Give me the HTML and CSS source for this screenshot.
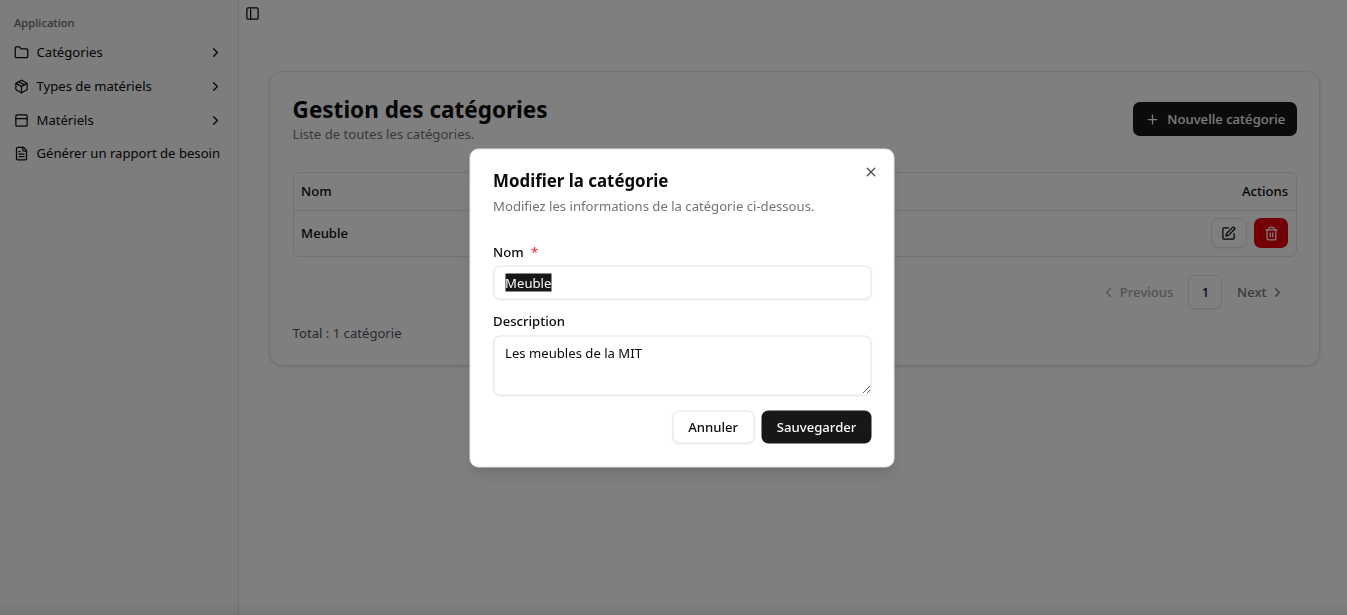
FILE: index.html
```html
<!DOCTYPE html>
<html lang="fr">
<head>
<meta charset="utf-8">
<title>Gestion des catégories</title>
<link rel="stylesheet" href="styles.css">
</head>
<body>
<div class="app">
  <aside class="sidebar">
    <div class="group-label">Application</div>
    <nav class="menu">
      <a class="menu-item"><svg class="icon" viewBox="0 0 24 24"><path d="M20 20a2 2 0 0 0 2-2V8a2 2 0 0 0-2-2h-7.9a2 2 0 0 1-1.69-.9L9.6 3.9A2 2 0 0 0 7.93 3H4a2 2 0 0 0-2 2v13a2 2 0 0 0 2 2Z"/></svg><span>Catégories</span><svg class="icon chevron" viewBox="0 0 24 24"><path d="m9 18 6-6-6-6"/></svg></a>
      <a class="menu-item"><svg class="icon" viewBox="0 0 24 24"><path d="M11 21.73a2 2 0 0 0 2 0l7-4A2 2 0 0 0 21 16V8a2 2 0 0 0-1-1.73l-7-4a2 2 0 0 0-2 0l-7 4A2 2 0 0 0 3 8v8a2 2 0 0 0 1 1.73z"/><path d="M12 22V12"/><path d="m3.3 7 8.7 5 8.7-5"/><path d="m7.5 4.27 9 5.15"/></svg><span>Types de matériels</span><svg class="icon chevron" viewBox="0 0 24 24"><path d="m9 18 6-6-6-6"/></svg></a>
      <a class="menu-item"><svg class="icon" viewBox="0 0 24 24"><rect width="18" height="18" x="3" y="3" rx="2"/><path d="M3 9h18"/></svg><span>Matériels</span><svg class="icon chevron" viewBox="0 0 24 24"><path d="m9 18 6-6-6-6"/></svg></a>
      <a class="menu-item"><svg class="icon" viewBox="0 0 24 24"><path d="M15 2H6a2 2 0 0 0-2 2v16a2 2 0 0 0 2 2h12a2 2 0 0 0 2-2V7Z"/><path d="M14 2v4a2 2 0 0 0 2 2h4"/><path d="M10 9H8"/><path d="M16 13H8"/><path d="M16 17H8"/></svg><span>Générer un rapport de besoin</span></a>
    </nav>
  </aside>
  <main class="main">
    <div class="topbar"><svg class="icon" viewBox="0 0 24 24"><rect width="18" height="18" x="3" y="3" rx="2"/><path d="M9 3v18"/></svg></div>
    <section class="card">
      <header class="card-header">
        <div>
          <h1 class="title">Gestion des catégories</h1>
          <p class="subtitle">Liste de toutes les catégories.</p>
        </div>
        <button class="btn btn-primary btn-new"><svg class="icon" viewBox="0 0 24 24"><path d="M5 12h14"/><path d="M12 5v14"/></svg>Nouvelle catégorie</button>
      </header>
      <div class="table">
        <div class="row row-head"><span>Nom</span><span>Actions</span></div>
        <div class="row row-body"><span>Meuble</span>
          <div class="actions">
            <button class="btn btn-outline btn-edit"><svg class="icon" viewBox="0 0 24 24"><path d="M12 3H5a2 2 0 0 0-2 2v14a2 2 0 0 0 2 2h14a2 2 0 0 0 2-2v-7"/><path d="M18.375 2.625a1 1 0 0 1 3 3l-9.013 9.014a2 2 0 0 1-.853.505l-2.873.84a.5.5 0 0 1-.62-.62l.84-2.873a2 2 0 0 1 .506-.852z"/></svg></button>
            <button class="btn btn-delete"><svg class="icon" viewBox="0 0 24 24"><path d="M3 6h18"/><path d="M19 6v14c0 1-1 2-2 2H7c-1 0-2-1-2-2V6"/><path d="M8 6V4c0-1 1-2 2-2h4c1 0 2 1 2 2v2"/><path d="M10 11v6"/><path d="M14 11v6"/></svg></button>
          </div>
        </div>
      </div>
      <div class="pagination">
        <span class="page-link page-prev"><svg class="icon" viewBox="0 0 24 24"><path d="m15 18-6-6 6-6"/></svg>Previous</span>
        <span class="btn btn-outline page-number">1</span>
        <span class="page-link page-next">Next<svg class="icon" viewBox="0 0 24 24"><path d="m9 18 6-6-6-6"/></svg></span>
      </div>
      <p class="total">Total : 1 catégorie</p>
    </section>
  </main>
</div>
<div class="overlay">
  <form class="dialog">
    <div class="dialog-head">
      <h2 class="dialog-title">Modifier la catégorie</h2>
      <svg class="icon close" viewBox="0 0 24 24"><path d="M18 6 6 18"/><path d="m6 6 12 12"/></svg>
    </div>
    <p class="dialog-text">Modifiez les informations de la catégorie ci-dessous.</p>
    <label class="label">Nom <span class="required">*</span></label>
    <div class="field"><span class="selected">Meuble</span></div>
    <label class="label label-desc">Description</label>
    <textarea class="field area">Les meubles de la MIT</textarea>
    <div class="dialog-actions">
      <button type="button" class="btn btn-outline btn-cancel">Annuler</button>
      <button type="button" class="btn btn-primary btn-save">Sauvegarder</button>
    </div>
  </form>
</div>
</body>
</html>
```
FILE: styles.css
```css
* { box-sizing: border-box; margin: 0; }
html { font-size: 15px; }
body {
  font: 13.125px/18.67px "Noto Sans", sans-serif;
  color: #0a0a0a;
  background: #fff;
  overflow: hidden;
}
.icon {
  width: 15px;
  height: 15px;
  flex: none;
  fill: none;
  stroke: currentColor;
  stroke-width: 2;
  stroke-linecap: round;
  stroke-linejoin: round;
}
.app { display: flex; height: 615px; }
.sidebar {
  width: 239px;
  flex: none;
  padding: 7.5px;
  background: #fafafa;
  border-right: 1px solid #e5e5e5;
}
.group-label {
  height: 30px;
  padding: 0 6.5px;
  font-size: 11.25px;
  line-height: 30px;
  font-weight: 500;
  color: #6b6b6b;
}
.menu { display: flex; flex-direction: column; gap: 4px; }
.menu-item {
  display: flex;
  align-items: center;
  gap: 7.5px;
  height: 30px;
  padding: 0 7px 0 6.5px;
  white-space: nowrap;
}
.menu-item:last-child { margin-top: -1px; }
.chevron { margin-left: auto; margin-right: 1px; }
.main { flex: 1; }
.topbar { height: 41px; padding: 6px 0 0 6px; }
.card {
  height: 295px;
  margin: 30px 27px 0 30px;
  padding: 22.4px 22.4px 0 22.6px;
  border: 1px solid #e5e5e5;
  border-radius: 13px;
  box-shadow: 0 1px 3px rgba(0,0,0,.1), 0 1px 2px -1px rgba(0,0,0,.1);
}
.card-header { display: flex; justify-content: space-between; align-items: center; height: 50px; }
.title { font-size: 22.5px; line-height: 30px; font-weight: 700; }
.subtitle { color: #737373; }
.btn {
  display: flex;
  align-items: center;
  justify-content: center;
  border: 0;
  border-radius: 7px;
  font: 500 13.125px/18.67px "Noto Sans", sans-serif;
}
.btn-primary { background: #171717; color: #fafafa; }
.btn-new { width: 164px; height: 34px; padding: 0 0 0 1px; gap: 7.5px; }
.btn-outline { background: #fff; color: #0a0a0a; border: 1px solid #e5e5e5; box-shadow: 0 1px 2px rgba(0,0,0,.05); }
.table {
  height: 85px;
  margin-top: 27.6px;
  border: 1px solid #e5e5e5;
  border-radius: 7px;
  font-weight: 500;
}
.row { display: flex; align-items: center; justify-content: space-between; padding: 0 7.5px; }
.row-head { height: 38px; border-bottom: 1px solid #e5e5e5; }
.row-body { height: 45px; padding-right: 8px; }
.actions { display: flex; gap: 7px; }
.btn-edit { width: 36px; height: 30px; }
.btn-delete { width: 34px; height: 30px; padding: 0 0 0 1px; background: #e7000b; color: #fff; }
.pagination { display: flex; justify-content: flex-end; margin-top: 18px; font-weight: 500; color: #737373; }
.page-link { display: flex; align-items: center; height: 34px; gap: 3.5px; }
.page-link .icon { margin-top: 1px; }
.page-prev { padding-right: 14.6px; color: #a1a5ab; gap: 3.4px; }
.page-number { width: 34px; height: 34px; padding-left: 1px; }
.page-next { padding: 0 12px 0 15px; gap: 3px; }
.total { margin-top: 15px; color: #4a5565; }
.overlay {
  position: fixed;
  inset: 0;
  display: flex;
  justify-content: center;
  align-items: flex-start;
  padding: 149px 0 0 18px;
  background: linear-gradient(to top, rgba(0,0,0,.06), transparent 12px), rgba(0,0,0,.5);
}
.dialog {
  width: 425px;
  height: 319px;
  padding: 22.4px 22.4px 22.4px 22.6px;
  background: #fff;
  border: 1px solid #e5e5e5;
  border-radius: 9px;
  box-shadow: 0 10px 15px -3px rgba(0,0,0,.1), 0 4px 6px -4px rgba(0,0,0,.1);
  transform: translate(-.5px, -.5px);
}
.dialog-head { display: flex; justify-content: space-between; height: 17px; }
.dialog-title { font-size: 16.875px; line-height: 17px; font-weight: 700; }
.close { margin: -7px -7px 0 0; color: #4b4b4b; }
.dialog-text { margin-top: 8px; color: #737373; }
.label { display: block; margin-top: 27.3px; line-height: 18px; font-weight: 500; }
.required { color: #fb2c36; margin-left: 4px; }
.field {
  display: block;
  width: 100%;
  height: 34px;
  margin-top: 5px;
  padding: 7px 11px;
  border: 1px solid #e5e5e5;
  border-radius: 7px;
  background: #fff;
  box-shadow: 0 1px 2px rgba(0,0,0,.05);
}
.selected { background: #171717; color: #fafafa; }
.label-desc { margin-top: 12px; }
.area {
  height: 60px;
  margin-top: 6px;
  color: #0a0a0a;
  font: inherit;
  outline: none;
  resize: vertical;
}
.dialog-actions { display: flex; justify-content: flex-end; gap: 7px; margin-top: 15px; }
.btn-cancel { width: 82px; height: 33px; padding-bottom: 2px; }
.btn-save { width: 110px; height: 33px; padding: 0 5px 1.5px 6px; }
```
